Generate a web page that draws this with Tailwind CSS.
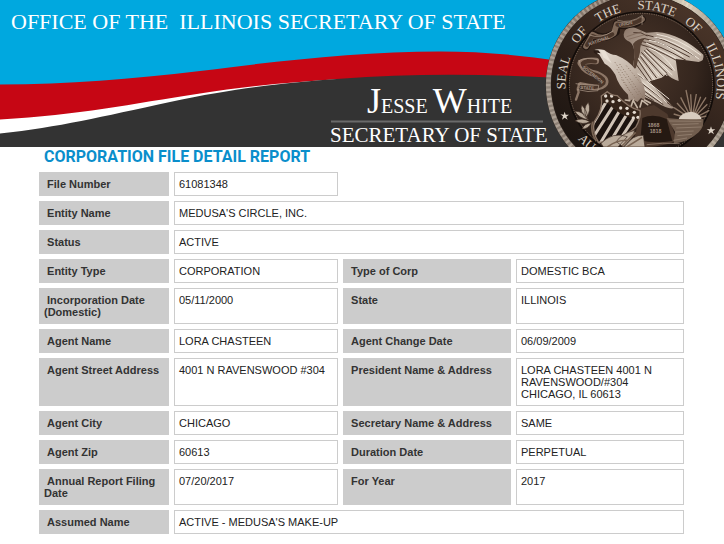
<!DOCTYPE html>
<html lang="en">
<head>
<meta charset="utf-8">
<title>Corporation File Detail Report</title>
<script src="https://cdn.jsdelivr.net/npm/@tailwindcss/browser@4"></script>
</head>
<body class="bg-white font-['Liberation_Sans',Arial,sans-serif] text-[11px] leading-3 text-[#222]">
<header>
<svg viewBox="0 0 724 147" class="block w-full font-['Liberation_Serif',serif]" role="img" aria-label="Office of the Illinois Secretary of State">
  <defs>
    <radialGradient id="bronze" cx="45%" cy="38%" r="65%"><stop offset="0" stop-color="#4b372b"/><stop offset=".65" stop-color="#35261e"/><stop offset="1" stop-color="#1d1410"/></radialGradient>
    <linearGradient id="band" x1="0" y1="1" x2=".7" y2="0"><stop offset="0" stop-color="#15100d"/><stop offset=".45" stop-color="#2a1e18"/><stop offset="1" stop-color="#4a3529"/></linearGradient>
    <linearGradient id="rope" x1="0" y1="0" x2="1" y2="0"><stop offset="0" stop-color="#8f8378"/><stop offset=".45" stop-color="#756356"/><stop offset=".75" stop-color="#e2d9c4"/><stop offset="1" stop-color="#6e6258"/></linearGradient>
    <linearGradient id="wing" x1="0" y1="0" x2="1" y2="1"><stop offset="0" stop-color="#8b7668"/><stop offset=".5" stop-color="#d4c8bb"/><stop offset="1" stop-color="#80695b"/></linearGradient>
    <linearGradient id="body" x1="0" y1="0" x2="1" y2="1"><stop offset="0" stop-color="#e6ddd3"/><stop offset=".6" stop-color="#c1b2a5"/><stop offset="1" stop-color="#8b7567"/></linearGradient>
    <path id="ring" d="M303 482A227 227 0 1 1 304 482"/>
    <path id="ringLow" d="M53 255A250 250 0 0 0 553 255"/>
    <clipPath id="shield"><path d="M202 275Q214 286 232 287Q262 322 300 332Q304 352 287 382Q250 417 176 428Q155 395 163 365Q190 330 184 288Z"/></clipPath>
  </defs>
  <rect width="724" height="147" fill="#00a8df"/>
  <path fill="#fff" d="M0 100L360 76V147H0Z"/>
  <path fill="#c60614" d="M0 84.500C70 84.500 130 79 200 71C270 62 360 51.500 440 51.500C480 51.500 520 55 560 61V90H340V79C290 82 240 87 200 93.500C130 104 80 115 0 119.500Z"/>
  <path fill="#333" d="M0 133.500C60 127 100 117 170 102C240 87 290 82.500 340 78.800Q440 71 560 78L724 100V147H0Z"/>
  <text x="11" y="29" font-size="22" fill="#fff" xml:space="preserve">OFFICE OF THE&#160; ILLINOIS SECRETARY OF STATE</text>
  <text x="367" y="113" font-size="36" fill="#fff">J<tspan font-size="20">ESSE</tspan><tspan font-size="20"> </tspan><tspan font-size="36">W</tspan><tspan font-size="20">HITE</tspan></text>
  <path stroke="#6a6a6a" stroke-width="2" d="M331 121.500H543"/>
  <text x="330" y="142" font-size="21" fill="#fff">SECRETARY OF STATE</text>

  <g transform="translate(540) scale(.33333)">
    <circle cx="303" cy="255" r="286" fill="#2a201a"/>
    <circle cx="303" cy="255" r="278" fill="none" stroke="url(#rope)" stroke-width="15"/>
    <circle cx="303" cy="255" r="278" fill="none" stroke="#c8bcae" stroke-opacity=".55" stroke-width="13" stroke-dasharray="7 7"/>
    <circle cx="303" cy="255" r="269" fill="url(#band)"/>
    <circle cx="303" cy="255" r="219" fill="url(#bronze)" stroke="#120c09" stroke-width="5"/>
    <circle cx="303" cy="255" r="215" fill="none" stroke="#94806f" stroke-width="2.500" stroke-dasharray="3 4"/>
    <g fill="#ddd3c7" font-size="39" text-anchor="middle">
      <text><textPath href="#ring" startOffset="27.500%">SEAL</textPath></text>
      <text><textPath href="#ring" startOffset="35.800%">OF</textPath></text>
      <text><textPath href="#ring" startOffset="43.100%">THE</textPath></text>
      <text><textPath href="#ring" startOffset="53.200%">STATE</textPath></text>
      <text><textPath href="#ring" startOffset="61.400%">OF</textPath></text>
      <text><textPath href="#ring" startOffset="72.200%">ILLINOIS</textPath></text>
      <text><textPath href="#ringLow" startOffset="26%">AU</textPath></text>
    </g>
    <path id="star" fill="#ded4c8" d="M74 335L77 344L87 344L79 350L83 359L74 353L66 359L69 349L61 343L71 344Z"/>
    <use href="#star" x="439" y="44"/>

    <g fill="none" stroke-linecap="round" stroke-linejoin="round">
      <path stroke="#211611" stroke-width="23" d="M306 58Q270 85 230 72L228 96Q190 124 158 102L138 139"/>
      <path stroke="#7e6858" stroke-width="17" d="M306 58Q270 80 230 72L222 100Q190 124 158 104L138 139"/>
      <path stroke="#493529" stroke-width="12" d="M303 59Q270 78 232 74M217 103Q185 121 158 108L141 135"/>
      <path stroke="#8d7767" stroke-width="19" d="M168 183Q135 180 122 190Q137 218 169 222Q201 235 195 250Q183 270 122 256"/>
      <path stroke="#8d7767" stroke-width="7" d="M122 256Q108 263 116 276L108 299"/>
      <path stroke="#493529" stroke-width="13" d="M165 184Q138 180 127 192Q142 218 171 226Q195 236 190 249Q174 266 125 260"/>
      <path stroke="#b3a08f" stroke-width="2" d="M233 61Q270 73 307 46L306 73M148 105Q181 119 219 93M116 182Q140 170 175 180M124 202L117 181M108 251Q150 257 176 256L174 272Q145 279 113 269"/>
    </g>
    <g fill="#a8968a" font-family="Liberation Sans" font-size="13" font-weight="bold">
      <text transform="translate(237 80) rotate(-11)">UNION</text>
      <text transform="translate(148 137) rotate(-20)">NATIONAL</text>
      <text transform="translate(126 203) rotate(39)">SOVEREIGN</text>
      <text transform="translate(121 266) rotate(5)">STATE</text>
    </g>

    <path fill="url(#wing)" d="M251 103Q252 81 285 83L319 98L351 96Q424 103 490 164Q494 182 476 186L438 181L407 177L416 243Q394 237 380 221L365 233L329 244L348 267L403 324Q386 330 354 310L308 288L265 255L277 206Q292 144 270 126Q250 118 251 103Z"/>
    <path fill="#574235" d="M279 132Q291 115 317 113Q298 132 300 157L288 203L276 213Q288 169 279 132Z"/>
    <g fill="none" stroke="#4b372c" stroke-width="3">
      <path d="M280 98Q304 94 322 108M319 105Q370 113 466 169M314 116Q360 123 449 171M308 125Q353 132 438 181M303 134Q338 142 409 181M319 146L397 211M312 151L382 221M304 157L369 228M301 169L350 234M294 180L335 241M287 191L323 241M283 218L363 270M276 229L397 319M275 246L370 314M281 265L341 302"/>
      <path stroke="#796253" stroke-width="2" d="M260 110L305 95M265 118L315 104"/>
    </g>
    <g fill="none" stroke="#eee5da" stroke-width="3" stroke-linecap="round">
      <path d="M351 103Q412 112 482 165M342 111Q400 117 477 177M328 121Q375 126 429 170M319 129L406 174M327 144Q370 158 404 211M319 151L396 224M312 156L381 227M304 165L357 228M296 176L343 238M283 213L387 297M280 224L380 307M278 237L365 307"/>
    </g>
    <path fill="url(#body)" d="M161 151Q173 145 193 150Q211 165 228 165Q267 181 287 209L309 252Q318 274 315 301L303 294L292 306L278 298L266 304L264 284Q235 256 226 224Q209 197 194 191L178 164Z"/>
    <path fill="#2b1c15" d="M160 150L175 151L182 160L170 158L172 165L162 158Z"/>
    <path fill="#e9e0d5" d="M181 150Q190 149 196 155L215 190L190 172Z"/>
    <g stroke="#8b7565" stroke-width="3" stroke-dasharray="3 6"><path d="M225 187L297 288M239 192L308 290M245 239L286 296M259 197L305 253M231 208L273 279"/></g>

    <path fill="#4d392d" d="M232 287Q284 323 300 326L342 315L382 342L405 405V425Q350 445 277 441L296 360Z"/>
    <path fill="#251912" d="M307 354Q340 339 380 357L397 423Q340 432 301 421Z"/>
    <g fill="none" stroke="#c5b5a5" stroke-width="5" stroke-linecap="round"><path d="M280 299L273 320M280 302L292 323M269 302L256 300M306 301L300 321M307 302L323 314M314 300L331 309"/></g>
    <g fill="#a39182" font-family="Liberation Sans" font-size="16" font-weight="bold"><text x="323" y="380">1868</text><text x="329" y="400">1818</text></g>

    <g clip-path="url(#shield)">
      <path fill="#1c130f" d="M145 265H315V440H145Z"/>
      <path fill="none" stroke="#d0c3b6" stroke-width="9" d="M205 295L148 390M226 308L154 420M246 320L174 441M267 332L201 441M289 343L226 441M309 357L252 441"/>
      <path fill="#352419" d="M183 270L216 275L310 332L303 370L280 357Q236 343 205 311L184 307Z"/>
      <g fill="#e3d9ce"><circle cx="197" cy="288" r="5"/><circle cx="215" cy="288" r="5"/><circle cx="201" cy="303" r="5"/><circle cx="219" cy="305" r="5"/><circle cx="238" cy="301" r="5"/><circle cx="242" cy="324" r="5"/><circle cx="261" cy="325" r="5"/><circle cx="263" cy="341" r="5"/><circle cx="283" cy="337" r="5"/><circle cx="280" cy="354" r="5"/><circle cx="294" cy="352" r="5"/></g>
    </g>
    <path fill="none" stroke="#8a7566" stroke-width="4" d="M202 275Q214 286 232 287Q262 322 300 332Q304 352 287 382Q250 417 176 428Q155 395 163 365Q190 330 184 288Z"/>
    <g fill="#b9aa9a" stroke="#3a291f" stroke-width="2">
      <path d="M145 306Q127 327 139 352Q155 333 145 306ZM125 315Q117 335 142 357Q145 335 125 315ZM104 333Q115 354 146 360Q133 335 104 333ZM105 362Q128 377 150 365Q126 351 105 362ZM126 387Q144 388 154 369Q134 369 126 387Z"/>
      <path d="M183 430Q218 394 262 410L234 441H190ZM229 425Q244 401 284 391Q278 420 250 441ZM251 441Q279 403 310 406L315 441Z"/>
    </g>
    <path fill="none" stroke="#796453" stroke-width="5" d="M202 441Q231 419 264 421M246 438L287 397M260 441L306 412M158 365Q150 396 169 424"/>

    <g fill="none" stroke="#8d7766" stroke-width="4">
      <path d="M456 358L438 270M456 358L452 283M456 358L469 282M456 358L482 290M456 358L498 292M456 358L502 313M456 358L508 331M456 358L499 348M456 358L422 292M456 358L411 309M456 358L402 323M456 358L401 342"/>
    </g>
    <path fill="#d8ccbf" d="M415 360Q422 336 455 335Q484 341 486 361Z"/>
    <path fill="#715d4e" d="M380 354Q430 360 489 357Q495 377 476 397Q445 427 401 431L405 395Z"/>
    <path fill="none" stroke="#9d8978" stroke-width="2" d="M388 363L484 364M397 374L476 371M409 384L484 381M406 396L461 393M412 407L456 403M400 421L441 414M320 434Q366 427 419 431"/>
  </g>
</svg>
</header>
<main class="pr-[35px] pl-[34px]">
<h1 class="pl-[10px] font-['Roboto',sans-serif] text-base leading-5 font-bold text-[#0a8ecb]">CORPORATION FILE DETAIL REPORT</h1>
<table class="w-full table-fixed border-separate border-spacing-[5px] [&_td]:border [&_td]:border-[#ccc] [&_td]:px-1 [&_td]:py-[5px] [&_td]:align-top [&_th]:bg-[#ccc] [&_th]:px-[5px] [&_th]:py-[6px] [&_th]:text-left [&_th]:align-top [&_th]:font-bold [&_th]:text-[#333]">
<colgroup><col class="w-[130px]"><col class="w-[164px]"><col><col></colgroup>
<tbody>
<tr><th scope="row">&nbsp;File Number</th><td>61081348</td></tr>
<tr><th scope="row">&nbsp;Entity Name</th><td colspan="3">MEDUSA'S CIRCLE, INC.</td></tr>
<tr><th scope="row">&nbsp;Status</th><td colspan="3">ACTIVE</td></tr>
<tr><th scope="row">&nbsp;Entity Type</th><td>CORPORATION</td><th scope="row">&nbsp;Type of Corp</th><td>DOMESTIC BCA</td></tr>
<tr><th scope="row">&nbsp;Incorporation Date (Domestic)</th><td>05/11/2000</td><th scope="row">&nbsp;State</th><td>ILLINOIS</td></tr>
<tr><th scope="row">&nbsp;Agent Name</th><td>LORA CHASTEEN</td><th scope="row">&nbsp;Agent Change Date</th><td>06/09/2009</td></tr>
<tr><th scope="row">&nbsp;Agent Street Address</th><td>4001 N RAVENSWOOD #304</td><th scope="row">&nbsp;President Name &amp; Address</th><td>LORA CHASTEEN 4001 N<br>RAVENSWOOD/#304<br>CHICAGO, IL 60613</td></tr>
<tr><th scope="row">&nbsp;Agent City</th><td>CHICAGO</td><th scope="row">&nbsp;Secretary Name &amp; Address</th><td>SAME</td></tr>
<tr><th scope="row">&nbsp;Agent Zip</th><td>60613</td><th scope="row">&nbsp;Duration Date</th><td>PERPETUAL</td></tr>
<tr><th scope="row">&nbsp;Annual Report Filing Date</th><td>07/20/2017</td><th scope="row">&nbsp;For Year</th><td>2017</td></tr>
<tr><th scope="row">&nbsp;Assumed Name</th><td colspan="3">ACTIVE - MEDUSA'S MAKE-UP</td></tr>
</tbody>
</table>
</main>
</body>
</html>
